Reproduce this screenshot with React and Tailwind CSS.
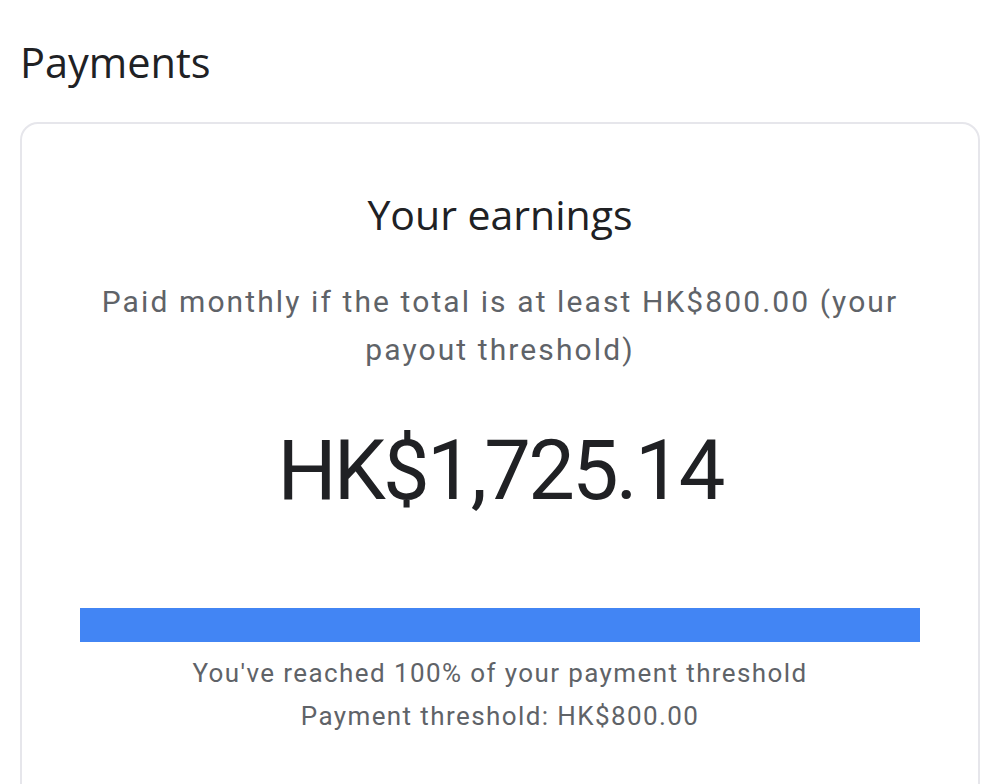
import React from 'react';

const pct = 100;

export default function App() {
  return (
    <div className="min-h-[784px] bg-white px-5 pt-[38px] font-['Roboto',sans-serif] overflow-hidden">
      <h1 className="font-['Open_Sans',sans-serif] text-[41.5px] leading-[48px] text-[#202124]">Payments</h1>
      <div className="mt-[36px] h-[700px] rounded-[18px] border-2 border-[#e6e6eb] px-[58px] pt-[66px]">
        <h2 className="text-center font-['Open_Sans',sans-serif] text-[41px] leading-[48px] text-[#202124]">Your earnings</h2>
        <p className="mt-[40px] px-[10px] text-center text-[30px] leading-[48px] tracking-[2.1px] text-[#5f6368]">
          Paid monthly if the total is at least HK$800.00 (your payout threshold)
        </p>
        <p className="mt-[47px] text-center text-[83px] leading-[100px] tracking-[-2.8px] text-[#202124]">HK$1,725.14</p>
        <div className="mt-[87px] h-[34px] bg-[#e8eaed]">
          <div className="h-full bg-[#4285f4]" style={{ width: pct + '%' }} />
        </div>
        <div className="mt-[10px] text-center text-[26px] leading-[43px] tracking-[1.4px] text-[#5f6368]">
          <p>You've reached 100% of your payment threshold</p>
          <p>Payment threshold: HK$800.00</p>
        </div>
      </div>
    </div>
  );
}
